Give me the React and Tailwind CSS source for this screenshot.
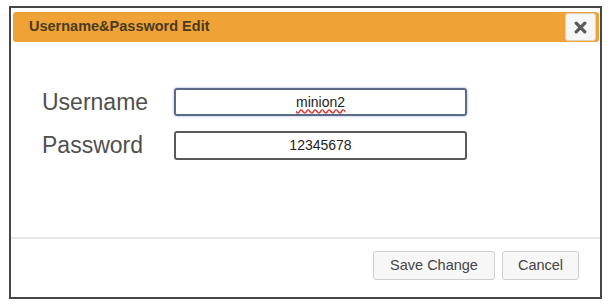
export default function App() {
  return (
    <div className="pl-[9px] pt-[6px] bg-white w-[613px] h-[308px]" style={{ fontFamily: '"Liberation Sans", Arial, sans-serif' }}>
      <div className="w-[593px] h-[293px] border-2 border-[#464646] bg-white flex flex-col pt-[4px]">
        {/* header */}
        <div className="ml-[2px] mr-[1px] h-[30px] rounded-[3px] bg-[#efa236] flex items-center justify-between pl-[16px] pr-[3px]">
          <span className="text-[14.5px] font-bold text-[#4b3a1e]">Username&amp;Password Edit</span>
          <button className="w-[31px] h-[28px] rounded-[3px] bg-[#f6f6f6] border border-[#e2d2b8] flex items-center justify-center">
            <svg viewBox="0 0 12 12" className="w-[13px] h-[13px]">
              <path d="M2 2 L10 10 M10 2 L2 10" stroke="#5a5a5a" strokeWidth="3" strokeLinecap="round" />
            </svg>
          </button>
        </div>

        {/* form */}
        <div className="pl-[31px] pt-[46px] h-[195px]">
          <div className="grid grid-cols-[132px_293px] gap-y-[15px] items-center">
            <label className="text-[23px] text-[#4f4f4f] leading-none">Username</label>
            <div className="h-[28px] rounded-[3px] border-2 border-[#5d6a86] shadow-[0_0_3px_#9bb3e0] flex items-center justify-center text-[14px] text-[#222]">
              <span className="underline decoration-wavy decoration-[#e03030] underline-offset-2">minion2</span>
            </div>
            <label className="text-[23px] text-[#4f4f4f] leading-none">Password</label>
            <div className="h-[29px] rounded-[3px] border-2 border-[#5a5a5a] flex items-center justify-center text-[14px] text-[#222]">
              12345678
            </div>
          </div>
        </div>

        {/* footer */}
        <div className="border-t-2 border-[#e8e8e8] flex justify-end gap-[7px] pt-[12px] pr-[21px]">
          <button className="h-[29px] w-[122px] rounded-[3px] border border-[#cfcfcf] bg-[#f7f7f7] text-[14.5px] text-[#444]">Save Change</button>
          <button className="h-[29px] w-[77px] rounded-[3px] border border-[#cfcfcf] bg-[#f7f7f7] text-[14.5px] text-[#444]">Cancel</button>
        </div>
      </div>
    </div>
  )
}
